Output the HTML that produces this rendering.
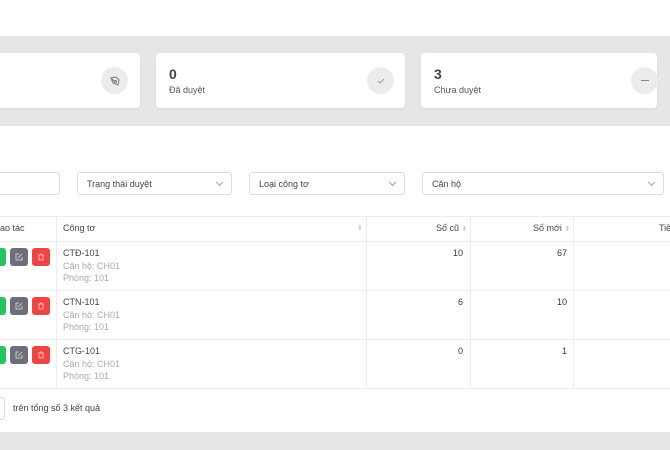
<!DOCTYPE html>
<html><head><meta charset="utf-8"><style>
*{box-sizing:border-box;margin:0;padding:0}
body{width:670px;height:450px;overflow:hidden;background:#e6e6e6;font-family:"Liberation Sans",sans-serif;position:relative;color:#333}
.a{position:absolute}
.card{position:absolute;top:53px;height:55px;background:#fff;border-radius:4px;box-shadow:0 1px 3px rgba(0,0,0,.05)}
.num{position:absolute;left:13px;top:13px;font-size:14px;font-weight:bold;color:#3f4254}
.lbl{position:absolute;left:13px;top:32px;font-size:9px;color:#555}
.ic{position:absolute;top:14px;width:27px;height:27px;border-radius:50%;background:#ececef;display:flex;align-items:center;justify-content:center}
.sel{position:absolute;top:172px;height:23px;border:1px solid #dcdce0;border-radius:3px;background:#fff;font-size:9px;color:#444;padding:6px 9px}
.sel:after{content:"";position:absolute;right:9px;top:7px;width:4px;height:4px;border-right:1px solid #999;border-bottom:1px solid #999;transform:rotate(45deg)}
.sel.n:after{display:none}
.hl{position:absolute;height:1px;background:#ececf2}
.vl{position:absolute;width:1px;background:#ececf2;top:216px;height:172px}
.t{position:absolute;font-size:9px}
.g{color:#aaa}
.btn{position:absolute;width:18px;height:18px;border-radius:3px;display:flex;align-items:center;justify-content:center}
</style></head><body>
<div class="a" style="left:0;top:0;width:670px;height:36px;background:#fff"></div>
<div class="card" style="left:-10px;width:150px"><div class="ic" style="left:111px"><svg width="12" height="12" viewBox="0 0 12 12" fill="none" stroke="#777" stroke-width="1"><path d="M2 3l5-1 3 3-1 5-5-2z M2 3l4 4"/><circle cx="6.5" cy="6.5" r="1"/></svg></div></div>
<div class="card" style="left:156px;width:249px"><div class="num">0</div><div class="lbl">Đã duyệt</div><div class="ic" style="left:211px"><svg width="10" height="10" viewBox="0 0 10 10" fill="none" stroke="#888" stroke-width="0.8"><path d="M2 5l2 2 4-4"/></svg></div></div>
<div class="card" style="left:421px;width:236px"><div class="num">3</div><div class="lbl">Chưa duyệt</div><div class="ic" style="left:210px"><div style="width:8px;height:1px;background:#888"></div></div></div>
<div class="a" style="left:0;top:126px;width:670px;height:306px;background:#fff"></div>
<div class="sel n" style="left:-10px;width:70px"></div>
<div class="sel" style="left:77px;width:155px">Trạng thái duyệt</div>
<div class="sel" style="left:249px;width:156px">Loại công tơ</div>
<div class="sel" style="left:422px;width:242px">Căn hộ</div>
<div class="hl" style="left:0;top:216px;width:670px"></div>
<div class="hl" style="left:0;top:241px;width:670px"></div>
<div class="hl" style="left:0;top:290px;width:670px"></div>
<div class="hl" style="left:0;top:339px;width:670px"></div>
<div class="hl" style="left:0;top:388px;width:670px"></div>
<div class="vl" style="left:56px"></div><div class="vl" style="left:366px"></div><div class="vl" style="left:470px"></div><div class="vl" style="left:573px"></div>
<div class="t" style="left:0;top:223px;color:#444">ao tác</div>
<div class="t" style="left:63px;top:223px;color:#444">Công tơ</div>
<div class="t" style="left:357px;top:224px;color:#ccc;font-size:7px">⬍</div>
<div class="t" style="left:436px;top:223px;color:#444">Số cũ <span style="color:#ccc;font-size:7px">⬍</span></div>
<div class="t" style="left:533px;top:223px;color:#444">Số mới <span style="color:#ccc;font-size:7px">⬍</span></div>
<div class="t" style="left:659px;top:223px;color:#444">Tiề</div>

<div class="btn" style="left:-12px;top:248px;background:#22c55e"></div><div class="btn" style="left:10px;top:248px;background:#6b7078"><svg width="8" height="8" viewBox="0 0 8 8" fill="none" stroke="#ddd" stroke-width=".8"><path d="M4 1H1v6h6V4M3 5l4-4"/></svg></div><div class="btn" style="left:32px;top:248px;background:#ef4444"><svg width="8" height="8" viewBox="0 0 8 8" fill="none" stroke="#fcc" stroke-width=".8"><path d="M1 2h6M2 2v5h4V2M3 1h2"/></svg></div>
<div class="btn" style="left:-12px;top:297px;background:#22c55e"></div><div class="btn" style="left:10px;top:297px;background:#6b7078"><svg width="8" height="8" viewBox="0 0 8 8" fill="none" stroke="#ddd" stroke-width=".8"><path d="M4 1H1v6h6V4M3 5l4-4"/></svg></div><div class="btn" style="left:32px;top:297px;background:#ef4444"><svg width="8" height="8" viewBox="0 0 8 8" fill="none" stroke="#fcc" stroke-width=".8"><path d="M1 2h6M2 2v5h4V2M3 1h2"/></svg></div>
<div class="btn" style="left:-12px;top:346px;background:#22c55e"></div><div class="btn" style="left:10px;top:346px;background:#6b7078"><svg width="8" height="8" viewBox="0 0 8 8" fill="none" stroke="#ddd" stroke-width=".8"><path d="M4 1H1v6h6V4M3 5l4-4"/></svg></div><div class="btn" style="left:32px;top:346px;background:#ef4444"><svg width="8" height="8" viewBox="0 0 8 8" fill="none" stroke="#fcc" stroke-width=".8"><path d="M1 2h6M2 2v5h4V2M3 1h2"/></svg></div>

<div class="t" style="left:63px;top:248px;color:#444">CTĐ-101</div><div class="t g" style="left:63px;top:261px">Căn hộ: CH01</div><div class="t g" style="left:63px;top:273px">Phòng: 101</div>
<div class="t" style="left:63px;top:297px;color:#444">CTN-101</div><div class="t g" style="left:63px;top:310px">Căn hộ: CH01</div><div class="t g" style="left:63px;top:322px">Phòng: 101</div>
<div class="t" style="left:63px;top:346px;color:#444">CTG-101</div><div class="t g" style="left:63px;top:359px">Căn hộ: CH01</div><div class="t g" style="left:63px;top:371px">Phòng: 101</div>

<div class="t" style="left:366px;width:97px;text-align:right;top:248px">10</div><div class="t" style="left:470px;width:97px;text-align:right;top:248px">67</div>
<div class="t" style="left:366px;width:97px;text-align:right;top:297px">6</div><div class="t" style="left:470px;width:97px;text-align:right;top:297px">10</div>
<div class="t" style="left:366px;width:97px;text-align:right;top:346px">0</div><div class="t" style="left:470px;width:97px;text-align:right;top:346px">1</div>

<div class="a" style="left:-10px;top:397px;width:15px;height:23px;border:1px solid #dcdce0;border-radius:3px"></div>
<div class="t" style="left:13px;top:403px;color:#444">trên tổng số 3 kết quả</div>
</body></html>
